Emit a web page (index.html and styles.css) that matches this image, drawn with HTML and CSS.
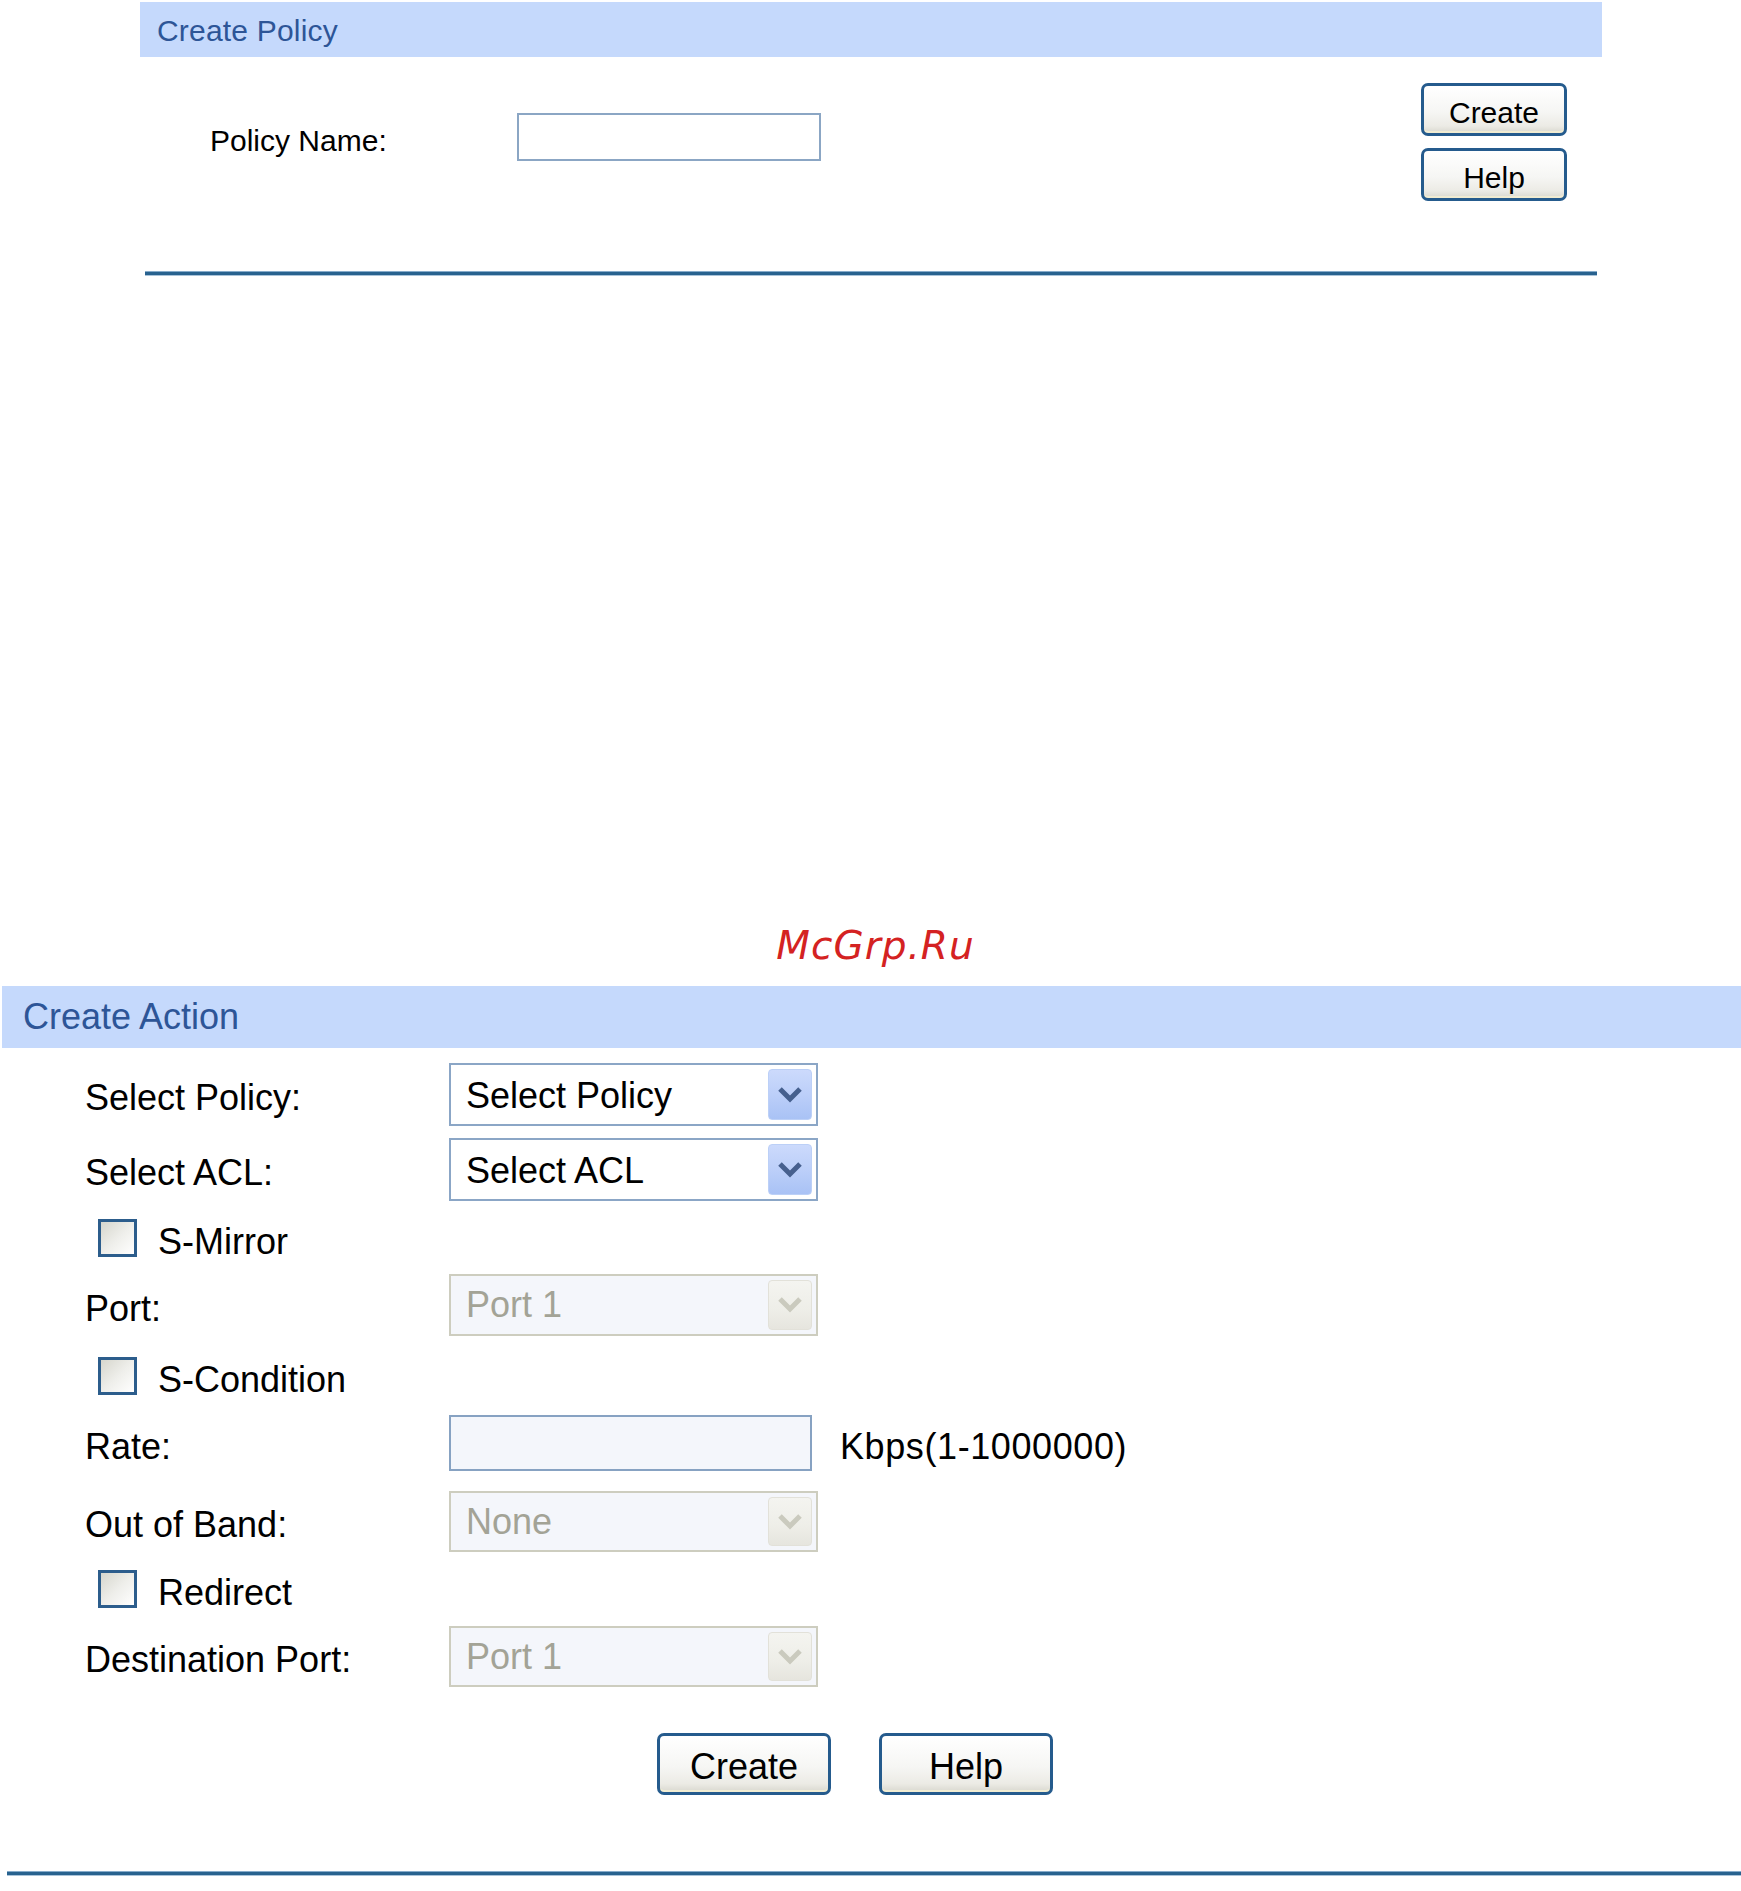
FILE: index.html
```html
<!DOCTYPE html>
<html lang="en">
<head>
<meta charset="utf-8">
<title>Create Policy / Create Action</title>
<link rel="stylesheet" href="styles.css">
</head>
<body>
<section class="policy">
  <div class="hdr hdr-sm">Create Policy</div>
  <div class="pbody">
    <div class="frow">
      <label class="plabel">Policy Name:</label>
      <input class="pinput" type="text">
    </div>
    <div class="pbtns">
      <button class="btn btn-sm">Create</button>
      <button class="btn btn-sm">Help</button>
    </div>
  </div>
  <div class="line line-top"></div>
</section>

<div class="wm">McGrp.Ru</div>

<section class="action">
  <div class="hdr hdr-lg">Create Action</div>
  <div class="abody">
    <div class="row r1 h63">
      <span class="lbl">Select Policy:</span>
      <div class="sel"><span class="val">Select Policy</span><span class="arr"><svg width="26" height="18" viewBox="0 0 26 18"><polyline points="3,3 13,13 23,3" fill="none" stroke="#46608e" stroke-width="5"/></svg></span></div>
    </div>
    <div class="row r2 h63">
      <span class="lbl">Select ACL:</span>
      <div class="sel"><span class="val">Select ACL</span><span class="arr"><svg width="26" height="18" viewBox="0 0 26 18"><polyline points="3,3 13,13 23,3" fill="none" stroke="#46608e" stroke-width="5"/></svg></span></div>
    </div>
    <div class="row h73">
      <span class="cb"></span><span class="cbl">S-Mirror</span>
    </div>
    <div class="row h62">
      <span class="lbl">Port:</span>
      <div class="sel dis"><span class="val">Port 1</span><span class="arr"><svg width="26" height="18" viewBox="0 0 26 18"><polyline points="3,3 13,13 23,3" fill="none" stroke="#cacabe" stroke-width="5"/></svg></span></div>
    </div>
    <div class="row h79">
      <span class="cb"></span><span class="cbl">S-Condition</span>
    </div>
    <div class="row h56">
      <span class="lbl">Rate:</span>
      <input class="rinput" type="text">
      <span class="unit">Kbps(1-1000000)</span>
    </div>
    <div class="row r7 h61">
      <span class="lbl">Out of Band:</span>
      <div class="sel dis"><span class="val">None</span><span class="arr"><svg width="26" height="18" viewBox="0 0 26 18"><polyline points="3,3 13,13 23,3" fill="none" stroke="#cacabe" stroke-width="5"/></svg></span></div>
    </div>
    <div class="row h74">
      <span class="cb"></span><span class="cbl">Redirect</span>
    </div>
    <div class="row h61">
      <span class="lbl">Destination Port:</span>
      <div class="sel dis"><span class="val">Port 1</span><span class="arr"><svg width="26" height="18" viewBox="0 0 26 18"><polyline points="3,3 13,13 23,3" fill="none" stroke="#cacabe" stroke-width="5"/></svg></span></div>
    </div>
    <div class="abtns">
      <button class="btn btn-lg">Create</button>
      <button class="btn btn-lg">Help</button>
    </div>
  </div>
  <div class="line line-bot"></div>
</section>
</body>
</html>
```

FILE: styles.css
```css
html, body {
  margin: 0;
  padding: 0;
  background: #ffffff;
}
body {
  font-family: "Liberation Sans", Arial, sans-serif;
  color: #000;
}

/* ---------- headers ---------- */
.hdr {
  background: #c5d9fc;
  color: #2d5597;
  box-sizing: border-box;
  white-space: nowrap;
}
.hdr-sm {
  height: 55px;
  font-size: 30px;
  line-height: 48px;
  padding-top: 5px;
  padding-left: 17px;
  letter-spacing: 0.2px;
}
.hdr-lg {
  height: 62px;
  font-size: 36px;
  line-height: 62px;
  padding-left: 21px;
}

/* ---------- divider lines ---------- */
.line {
  height: 3px;
  background: #28628f;
  border-top: 1px solid #86abca;
  border-bottom: 1px solid #a9c3d9;
}
.line-top {
  margin: 70px 5px 0 5px;
}
.line-bot {
  margin: 76px 0 0 5px;
}

/* ---------- buttons ---------- */
.btn {
  display: block;
  box-sizing: border-box;
  border: 3px solid #255b8d;
  border-radius: 7px;
  background: linear-gradient(#ffffff 0%, #f6f6f4 55%, #ecebe5 85%, #d9d8cf 100%);
  box-shadow: inset 0 -3px 0 -1px #f1ecd2;
  font-family: "Liberation Sans", Arial, sans-serif;
  color: #000;
  padding: 6px 0 0 0;
  margin: 0;
  cursor: pointer;
}
.btn-sm {
  width: 146px;
  height: 53px;
  font-size: 30px;
  line-height: 34px;
}
.btn-lg {
  width: 174px;
  height: 62px;
  font-size: 36px;
  line-height: 40px;
}

/* ---------- create policy ---------- */
.policy {
  margin: 2px 0 0 140px;
  width: 1462px;
}
.pbody {
  display: flex;
  justify-content: space-between;
  align-items: flex-start;
  padding: 26px 35px 0 70px;
}
.frow {
  display: flex;
  align-items: center;
  margin-top: 30px;
}
.plabel {
  width: 307px;
  font-size: 30px;
  line-height: 34px;
  padding-top: 8px;
}
.pinput {
  box-sizing: border-box;
  width: 304px;
  height: 48px;
  border: 2px solid #8ba6c4;
  background: #ffffff;
  padding: 0;
  margin: 0;
  outline: none;
}
.pbtns {
  display: flex;
  flex-direction: column;
  gap: 12px;
}

/* ---------- watermark ---------- */
.wm {
  margin-top: 648px;
  height: 44px;
  line-height: 44px;
  text-align: center;
  padding-left: 10px;
  font-family: "DejaVu Sans", sans-serif;
  font-style: italic;
  font-size: 39px;
  letter-spacing: 1px;
  color: #d42222;
}

/* ---------- create action ---------- */
.action {
  margin: 18px 0 0 2px;
}
.abody {
  padding-left: 83px;
  padding-top: 15px;
}
.row {
  display: flex;
  align-items: center;
  font-size: 36px;
}
.r2 { margin-top: 12px; }
.r7 { margin-top: 20px; }
.h56 { height: 56px; }
.h61 { height: 61px; }
.h62 { height: 62px; }
.h63 { height: 63px; }
.h73 { height: 73px; }
.h74 { height: 74px; }
.h79 { height: 79px; }

.lbl {
  width: 364px;
  flex: none;
  line-height: 40px;
  padding-top: 7px;
  white-space: nowrap;
}
.sel {
  box-sizing: border-box;
  width: 369px;
  height: 100%;
  border: 2px solid #8ba6c6;
  background: #ffffff;
  display: flex;
  align-items: center;
  justify-content: space-between;
}
.sel .val {
  padding-left: 15px;
  padding-top: 2px;
  line-height: 40px;
  white-space: nowrap;
}
.arr {
  box-sizing: border-box;
  width: 44px;
  height: calc(100% - 8px);
  margin-right: 4px;
  border: 1px solid #bcd0f7;
  border-radius: 4px;
  background: linear-gradient(#ccdafc 0%, #bccff9 50%, #a9c2f5 100%);
  display: flex;
  align-items: center;
  justify-content: center;
}
.sel.dis {
  border-color: #cdcdbf;
  background: #f4f6fb;
  color: #a3a396;
}
.sel.dis .val {
  padding-top: 0;
}
.sel.dis .arr {
  border-color: #e2e1d9;
  background: linear-gradient(#f4f4f0 0%, #eeeee8 60%, #e6e5de 100%);
}

.cb {
  box-sizing: border-box;
  width: 39px;
  height: 38px;
  margin-left: 13px;
  border: 3px solid #2c5d8c;
  background: linear-gradient(135deg, #d6d6cd 0%, #eeeeea 50%, #ffffff 100%);
  flex: none;
}
.cbl {
  margin-left: 21px;
  line-height: 40px;
  padding-top: 8px;
  white-space: nowrap;
}

.rinput {
  box-sizing: border-box;
  width: 363px;
  height: 56px;
  border: 2px solid #87a2c2;
  background: #f4f6fb;
  padding: 0;
  margin: 0;
  outline: none;
}
.unit {
  margin-left: 28px;
  line-height: 40px;
  padding-top: 7px;
  white-space: nowrap;
  letter-spacing: 0.6px;
}

.abtns {
  display: flex;
  gap: 48px;
  margin: 46px 0 0 572px;
}
```
